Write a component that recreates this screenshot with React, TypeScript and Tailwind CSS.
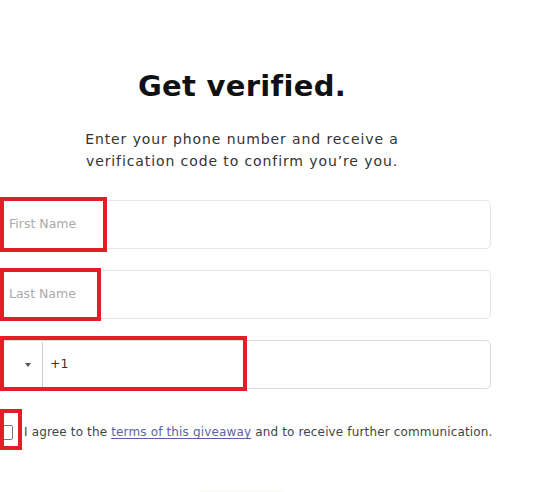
import React from "react";

const font = { fontFamily: '"DejaVu Sans", "Noto Sans", sans-serif' };

export default function App() {
  return (
    <div className="relative w-[535px] h-[492px] bg-white overflow-hidden" style={font}>
      <div className="ml-[-7px] w-[498px] flex flex-col">
        <h1 className="mt-[68px] text-center text-[29px] leading-[36px] font-bold text-[#111] tracking-[0.3px]">
          Get verified.
        </h1>
        <p className="mt-[24px] text-center text-[14px] leading-[22px] text-[#333] tracking-[0.9px]">
          Enter your phone number and receive a
          <br />
          verification code to confirm you’re you.
        </p>
        <div className="mt-[28px] flex flex-col gap-[21px]">
          <div className="h-[49px] rounded-[5px] border border-[#e6e6e6] flex items-center pl-[15px] text-[12.5px] text-[#aaa]">
            First Name
          </div>
          <div className="h-[49px] rounded-[5px] border border-[#e6e6e6] flex items-center pl-[15px] text-[12.5px] text-[#aaa]">
            Last Name
          </div>
          <div className="h-[49px] rounded-[5px] border border-[#dcdcdc] flex items-stretch">
            <div className="w-[49px] flex items-center justify-end pr-[11px] border-r border-[#cfcfcf] my-[1px]">
              <svg width="6" height="4" viewBox="0 0 6 4">
                <path d="M0 0 L6 0 L3 4 Z" fill="#555" />
              </svg>
            </div>
            <div className="flex items-center pl-[7px] text-[12.5px] text-[#333]">+1</div>
          </div>
        </div>
        <div className="mt-[34px] flex items-center gap-[11px] pl-[6px]">
          <div className="w-[14px] h-[15px] rounded-[2px] border border-[#777] bg-white shrink-0" />
          <span className="text-[12px] text-[#444] tracking-[0.15px] whitespace-nowrap">
            I agree to the{" "}
            <span className="text-[#5a5fa8] underline underline-offset-2">terms of this giveaway</span> and to
            receive further communication.
          </span>
        </div>
      </div>
      <div className="absolute left-[200px] top-[490px] w-[84px] h-[2px] bg-[#fbfaf7]" />

      <div className="absolute left-0 top-[197px] w-[107px] h-[55px] border-[4px] border-[#e41e26]" />
      <div className="absolute left-0 top-[268px] w-[101px] h-[53px] border-[4px] border-[#e41e26]" />
      <div className="absolute left-0 top-[336px] w-[247px] h-[55px] border-[4px] border-[#e41e26]" />
      <div className="absolute left-0 top-[409px] w-[22px] h-[41px] border-[4px] border-[#e41e26]" />
    </div>
  );
}
